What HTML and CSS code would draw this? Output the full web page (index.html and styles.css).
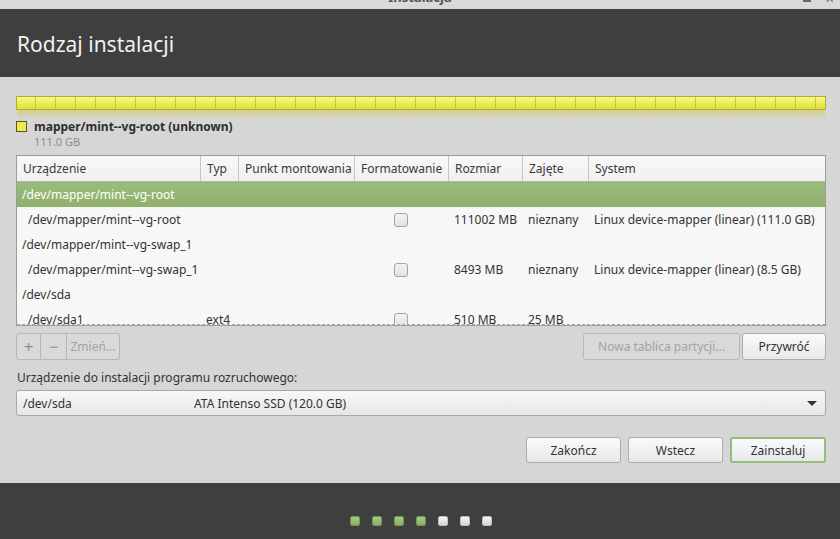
FILE: index.html
```html
<!DOCTYPE html>
<html lang="pl">
<head>
  <meta charset="UTF-8" />
  <title>Instalacja</title>
  <link rel="stylesheet" href="styles.css">
</head>
<body>
  <div class="titlebar">
    <span></span>
    <span class="wm-title">Instalacja</span>
    <span class="wm-buttons"><i class="wm-min"></i><i class="wm-close">×</i></span>
  </div>

  <header class="header">
    <h1>Rodzaj instalacji</h1>
  </header>

  <main class="main">
    <div class="disk-bar"></div>
    <div class="disk-reflect"></div>

    <div class="legend">
      <span class="legend-swatch"></span>
      <div>
        <div class="legend-name">mapper/mint--vg-root (unknown)</div>
        <div class="legend-size">111.0 GB</div>
      </div>
    </div>

    <div class="parts">
      <div class="parts-head row">
        <div>Urządzenie</div>
        <div>Typ</div>
        <div>Punkt montowania</div>
        <div>Formatowanie</div>
        <div>Rozmiar</div>
        <div>Zajęte</div>
        <div>System</div>
      </div>
      <div class="parts-body">
        <div class="row selected"><div class="dev">/dev/mapper/mint--vg-root</div></div>
        <div class="row">
          <div class="sub">/dev/mapper/mint--vg-root</div><div></div><div></div>
          <div class="center"><span class="check"></span></div>
          <div>111002 MB</div><div>nieznany</div><div>Linux device-mapper (linear) (111.0 GB)</div>
        </div>
        <div class="row"><div class="dev">/dev/mapper/mint--vg-swap_1</div></div>
        <div class="row">
          <div class="sub">/dev/mapper/mint--vg-swap_1</div><div></div><div></div>
          <div class="center"><span class="check"></span></div>
          <div>8493 MB</div><div>nieznany</div><div>Linux device-mapper (linear) (8.5 GB)</div>
        </div>
        <div class="row"><div class="dev">/dev/sda</div></div>
        <div class="row">
          <div class="sub">/dev/sda1</div><div>ext4</div><div></div>
          <div class="center"><span class="check"></span></div>
          <div>510 MB</div><div>25 MB</div><div></div>
        </div>
      </div>
    </div>

    <div class="toolbar">
      <div class="btn-group">
        <button class="btn disabled sq">+</button>
        <button class="btn disabled sq">−</button>
        <button class="btn disabled">Zmień...</button>
      </div>
      <div class="toolbar-right">
        <button class="btn disabled wide">Nowa tablica partycji...</button>
        <button class="btn revert">Przywróć</button>
      </div>
    </div>

    <p class="boot-label">Urządzenie do instalacji programu rozruchowego:</p>
    <div class="combo">
      <span class="combo-dev">/dev/sda</span>
      <span class="combo-name">ATA Intenso SSD (120.0 GB)</span>
      <span class="combo-arrow"></span>
    </div>

    <div class="actions">
      <button class="btn action">Zakończ</button>
      <button class="btn action">Wstecz</button>
      <button class="btn action primary">Zainstaluj</button>
    </div>
  </main>

  <footer class="footer">
    <span class="dot done"></span>
    <span class="dot done"></span>
    <span class="dot done"></span>
    <span class="dot done"></span>
    <span class="dot"></span>
    <span class="dot"></span>
    <span class="dot"></span>
  </footer>
</body>
</html>
```

FILE: styles.css
```css
* { box-sizing: border-box; }

body {
  margin: 0;
  width: 840px;
  height: 539px;
  overflow: hidden;
  font-family: "Noto Sans", "DejaVu Sans", sans-serif;
  font-size: 12px;
  color: #333;
  background: #d6d6d6;
}

/* window title bar, mostly cut off at the top */
.titlebar {
  height: 9px;
  overflow: hidden;
  display: grid;
  grid-template-columns: 1fr auto 1fr;
  background: #d9d9d9;
}

.wm-title {
  margin-top: -11px;
  font-size: 13px;
  font-weight: bold;
  line-height: 16px;
  color: #555;
}

.wm-buttons {
  display: flex;
  justify-content: flex-end;
  gap: 14px;
  padding-right: 6px;
}

.wm-min {
  display: block;
  width: 8px;
  height: 2px;
  background: #666;
}

.wm-close {
  font-style: normal;
  font-size: 15px;
  line-height: 10px;
  margin-top: -7px;
  color: #666;
}

.header {
  height: 68px;
  background: #3f3f3f;
  padding: 21px 17px 0;
}

.header h1 {
  margin: 0;
  font-size: 21px;
  font-weight: normal;
  line-height: 28px;
  color: #f2f2f2;
}

.main {
  height: 406px;
  padding: 19px 14px 0 16px;
}

/* partition bar */
.disk-bar {
  height: 14px;
  border: 1px solid #aead34;
  background:
    repeating-linear-gradient(to right, transparent 0 19px, rgba(160, 158, 40, 0.55) 19px 20px),
    linear-gradient(#f6f68a, #eeee5c 45%, #dede44);
  background-position: -1px 0, 0 0;
}

.disk-reflect {
  height: 10px;
  margin: 0 1px;
  background:
    repeating-linear-gradient(to right, transparent 0 19px, rgba(214, 214, 214, 0.5) 19px 20px),
    linear-gradient(rgba(205, 205, 70, 0.55), rgba(214, 214, 214, 0));
}

.legend {
  display: flex;
  gap: 7px;
  margin-top: 1px;
  height: 34px;
}

.legend-swatch {
  flex: none;
  width: 11px;
  height: 11px;
  background: #eded45;
  border: 1px solid #55553a;
}

.legend-name {
  font-weight: bold;
  color: #2e2e2e;
  line-height: 12px;
}

.legend-size {
  font-size: 11px;
  color: #8d8d8d;
  line-height: 13px;
  margin-top: 2px;
}

/* partition table */
.parts {
  width: 810px;
  border: 1px solid #9c9c9c;
  background: #f7f7f7;
}

.row {
  display: grid;
  grid-template-columns: 183px 38px 116px 94px 74px 66px 1fr;
  height: 25px;
  line-height: 25px;
  color: #333;
  white-space: nowrap;
}

.row > div { padding-left: 6px; }

.parts-head {
  height: 26px;
  background: linear-gradient(#f8f8f8, #f0f0f0);
  border-bottom: 1px solid #b4b4b4;
  color: #3a3a3a;
}

.parts-head > div {
  border-left: 1px solid #c6c6c6;
  padding-left: 6px;
}

.parts-head > div:first-child { border-left: none; }

.parts-body {
  height: 143px;
  overflow: hidden;
  border-bottom: 1px dashed #a8a8a8;
}

.row .dev { padding-left: 5px; grid-column: 1 / -1; }
.row .sub { padding-left: 11px; }
.row .center { display: flex; align-items: center; justify-content: center; padding: 0; }

.selected {
  background: linear-gradient(#9bbb7b, #8fb16d);
  color: #fff;
}

.check {
  width: 14px;
  height: 14px;
  border: 1px solid #a4a4a4;
  border-radius: 3px;
  background: linear-gradient(#f4f4f4, #e2e2e2);
}

/* buttons */
.btn {
  font-family: inherit;
  font-size: 12px;
  height: 27px;
  padding: 0 10px;
  border: 1px solid #acacac;
  border-radius: 3px;
  background: linear-gradient(#fafafa, #e8e8e8);
  color: #333;
}

.btn.disabled {
  background: #d9d9d9;
  border-color: #b8b8b8;
  color: #a3a3a3;
}

.toolbar {
  display: flex;
  justify-content: space-between;
  margin-top: 7px;
}

.btn-group { display: flex; }

.btn-group .btn {
  border-radius: 0;
  padding: 0 3px;
}

.btn-group .btn + .btn { border-left: none; }
.btn-group .btn:first-child { border-radius: 3px 0 0 3px; }
.btn-group .btn:last-child { border-radius: 0 3px 3px 0; width: 53px; }
.btn-group .sq { width: 25px; font-size: 17px; padding: 0; color: #8e8e8e; }
.btn-group .sq:nth-child(2) { width: 26px; }

.toolbar-right { display: flex; gap: 2px; }

.btn.wide { width: 157px; }
.btn.revert { width: 84px; }

.boot-label {
  margin: 9px 0 0 1px;
  line-height: 18px;
  color: #333;
}

.combo {
  display: flex;
  align-items: center;
  height: 26px;
  margin-top: 3px;
  width: 810px;
  border: 1px solid #a8a8a8;
  border-radius: 3px;
  background: linear-gradient(#f8f8f8, #e6e6e6);
  padding: 0 6px;
}

.combo-dev { width: 171px; }

.combo-name { flex: 1; }

.combo-arrow {
  width: 0;
  height: 0;
  margin-right: 2px;
  border-left: 5px solid transparent;
  border-right: 5px solid transparent;
  border-top: 5px solid #333;
}

.actions {
  display: flex;
  justify-content: flex-end;
  gap: 7px;
  margin-top: 21px;
  width: 810px;
}

.btn.action {
  width: 95px;
  height: 26px;
}

.btn.primary {
  width: 96px;
  border: 2px solid #97bb7a;
}

/* step dots */
.footer {
  height: 56px;
  background: #3f3f3f;
  display: flex;
  justify-content: center;
  gap: 12px;
  padding: 33px 0 0 2px;
}

.dot {
  width: 10px;
  height: 10px;
  border-radius: 2px;
  background: linear-gradient(#f6f6f6, #d4d4d4);
  border: 1px solid #bdbdbd;
}

.dot.done {
  background: linear-gradient(#a4c985, #86b063);
  border-color: #73994f;
}
```
